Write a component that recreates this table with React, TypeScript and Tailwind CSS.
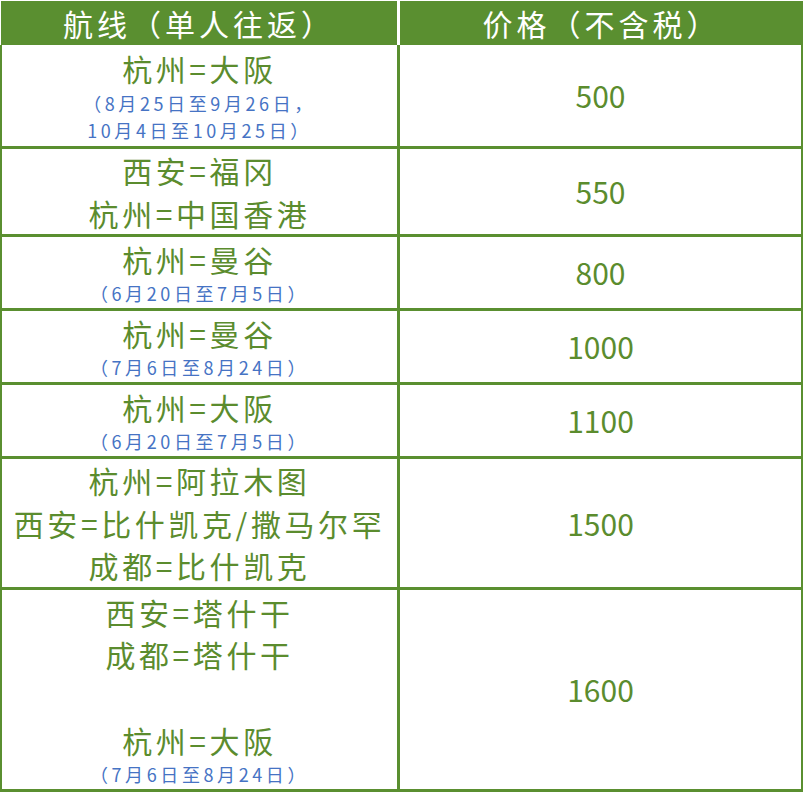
import React from "react";

type Line = { t: string; small?: boolean };

const rows: { h: string; lines: Line[]; price: string }[] = [
  {
    h: "h-[101px]",
    lines: [
      { t: "杭州=大阪" },
      { t: "（8月25日至9月26日，", small: true },
      { t: "10月4日至10月25日）", small: true },
    ],
    price: "500",
  },
  { h: "h-[85px]", lines: [{ t: "西安=福冈" }, { t: "杭州=中国香港" }], price: "550" },
  { h: "h-[71px]", lines: [{ t: "杭州=曼谷" }, { t: "（6月20日至7月5日）", small: true }], price: "800" },
  { h: "h-[71px]", lines: [{ t: "杭州=曼谷" }, { t: "（7月6日至8月24日）", small: true }], price: "1000" },
  { h: "h-[71px]", lines: [{ t: "杭州=大阪" }, { t: "（6月20日至7月5日）", small: true }], price: "1100" },
  {
    h: "h-[128px]",
    lines: [{ t: "杭州=阿拉木图" }, { t: "西安=比什凯克/撒马尔罕" }, { t: "成都=比什凯克" }],
    price: "1500",
  },
  {
    h: "h-[199px]",
    lines: [
      { t: "西安=塔什干" },
      { t: "成都=塔什干" },
      { t: "\u00a0" },
      { t: "杭州=大阪" },
      { t: "（7月6日至8月24日）", small: true },
    ],
    price: "1600",
  },
];

export default function App() {
  return (
    <div
      className="w-[803px] h-[792px] bg-white overflow-hidden"
      style={{ fontFamily: '"Noto Sans CJK SC", "Noto Sans", sans-serif' }}
    >
      <div className="flex pt-[1px] pl-[1px] h-[45px]">
        <div className="w-[396px] h-[44px] bg-[#5a8f30] flex items-center justify-center text-white text-[30px] tracking-[4px] leading-none">
          航线（单人往返）
        </div>
        <div className="w-[3px]" />
        <div className="flex-1 h-[44px] bg-[#5a8f30] flex items-center justify-center text-white text-[30px] tracking-[4px] leading-none">
          价格（不含税）
        </div>
      </div>
      <div className="border-l-2 border-r-2 border-b-[3px] border-[#5a8f30]">
        {rows.map((r, i) => (
          <div
            key={i}
            className={
              "flex border-[#5a8f30] " + (i < rows.length - 1 ? "border-b-[3px]" : "")
            }
          >
            <div className={"w-[395px] flex flex-col items-center justify-center " + r.h}>
              {r.lines.map((l, j) =>
                l.small ? (
                  <div key={j} className="text-[18px] leading-[27px] tracking-[3.6px] text-[#4673c4] whitespace-nowrap">
                    {l.t}
                  </div>
                ) : (
                  <div key={j} className="text-[30px] leading-[42.7px] tracking-[3.6px] text-[#5b8c2e] whitespace-nowrap">
                    {l.t}
                  </div>
                )
              )}
            </div>
            <div
              className={
                "flex-1 border-l-[3px] border-[#5a8f30] flex items-center justify-center text-[30px] text-[#5b8c2e] " +
                r.h
              }
            >
              {r.price}
            </div>
          </div>
        ))}
      </div>
    </div>
  );
}
